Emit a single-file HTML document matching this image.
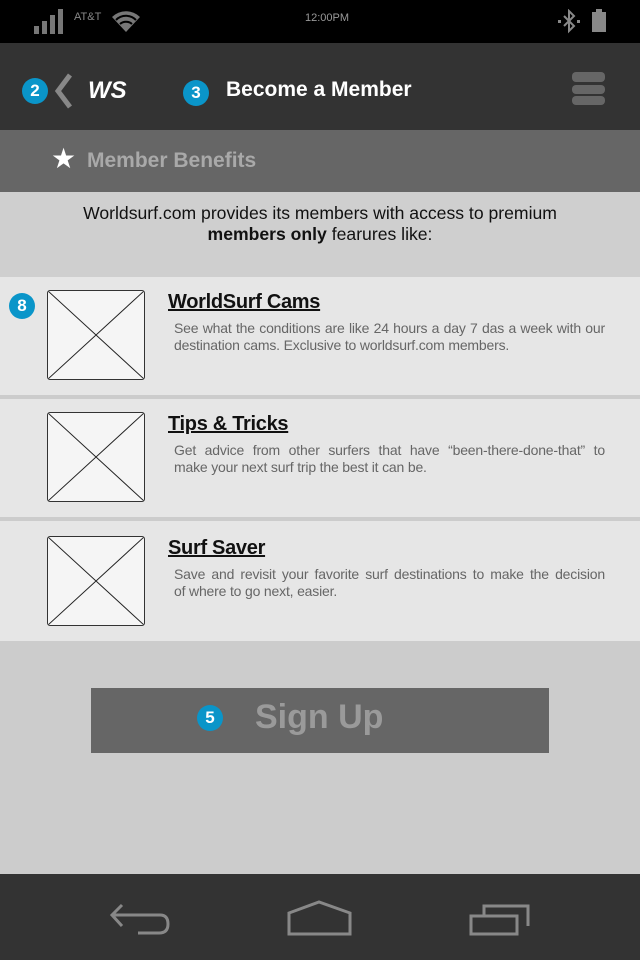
<!DOCTYPE html>
<html><head><style>
*{margin:0;padding:0;box-sizing:border-box}
body{width:640px;height:960px;background:#cccccc;font-family:"Liberation Sans",sans-serif;position:relative;overflow:hidden}
.abs{position:absolute}
.badge{position:absolute;width:26px;height:26px;border-radius:50%;background:#0a95c9;color:#fff;font-weight:bold;font-size:17px;text-align:center;line-height:26px}
.item{position:absolute;left:0;width:640px;background:#e6e6e6}
.img{position:absolute;left:47px;width:98px;height:90px;border:1.5px solid #333;border-radius:3px;background:#f5f5f5}
.ttl{position:absolute;left:168px;font-size:20px;font-weight:bold;color:#111;text-decoration:underline;letter-spacing:-0.3px}
.desc{position:absolute;left:174px;width:431px;font-size:14px;line-height:17px;color:#666;letter-spacing:-0.18px;white-space:nowrap}
.desc .j{text-align:justify;text-align-last:justify}
</style></head><body>
<div class="abs" style="left:0;top:0;width:640px;height:43px;background:#000"></div>
<svg class="abs" style="left:34px;top:8px" width="32" height="27"><rect x="0" y="18" width="5" height="8" fill="#777"/><rect x="8" y="13" width="5" height="13" fill="#777"/><rect x="16" y="7" width="5" height="19" fill="#777"/><rect x="24" y="1" width="5" height="25" fill="#777"/></svg>
<div class="abs" style="left:74px;top:11px;font-size:11px;color:#888">AT&amp;T</div>
<svg class="abs" style="left:110px;top:8px" width="32" height="25"><path d="M2 9 A20 20 0 0 1 30 9 L16 24 Z" fill="#777"/><path d="M6 12 A14 14 0 0 1 26 12 M10 16 A9 9 0 0 1 22 16" stroke="#000" stroke-width="2" fill="none"/></svg>
<div class="abs" style="left:305px;top:12px;font-size:11px;color:#999">12:00PM</div>
<svg class="abs" style="left:556px;top:9px" width="26" height="27"><path d="M8 7 L18 17 L13 22 L13 2 L18 7 L8 17" stroke="#888" stroke-width="2" fill="none"/><rect x="2" y="11" width="3" height="3" fill="#888"/><rect x="21" y="11" width="3" height="3" fill="#888"/></svg>
<svg class="abs" style="left:591px;top:9px" width="16" height="24"><rect x="5" y="0" width="6" height="3" fill="#888"/><rect x="1" y="3" width="14" height="20" fill="#888"/></svg>

<div class="abs" style="left:0;top:43px;width:640px;height:87px;background:#333"></div>
<div class="badge" style="left:22px;top:78px">2</div>
<svg class="abs" style="left:52px;top:73px" width="22" height="36"><path d="M18 2 L6 18 L18 34" stroke="#888" stroke-width="5" fill="none"/></svg>
<div class="abs" style="left:88px;top:77px;font-size:24px;font-weight:bold;font-style:italic;color:#fff">WS</div>
<div class="badge" style="left:183px;top:80px">3</div>
<div class="abs" style="left:226px;top:78px;font-size:21px;font-weight:bold;color:#fff">Become a Member</div>
<div class="abs" style="left:572px;top:72px;width:33px;height:10px;border-radius:4px;background:#666"></div>
<div class="abs" style="left:572px;top:85px;width:33px;height:9px;border-radius:4px;background:#666"></div>
<div class="abs" style="left:572px;top:96px;width:33px;height:9px;border-radius:4px;background:#666"></div>

<div class="abs" style="left:0;top:130px;width:640px;height:62px;background:#666"></div>
<div class="abs" style="left:51px;top:142px;font-size:28px;color:#fff">★</div>
<div class="abs" style="left:87px;top:149px;font-size:21px;font-weight:bold;color:#a9a9a9">Member Benefits</div>

<div class="abs" style="left:0;top:192px;width:640px;height:85px;background:#cfcfcf"></div>
<div class="abs" style="left:0;top:203px;width:640px;text-align:center;font-size:17.6px;line-height:21px;color:#111">Worldsurf.com provides its members with access to premium<br><b>members only</b> fearures like:</div>

<div class="item" style="top:277px;height:118px"></div>
<div class="item" style="top:399px;height:118px"></div>
<div class="item" style="top:521px;height:120px"></div>
<div class="badge" style="left:9px;top:293px">8</div>

<svg class="img" style="top:290px" viewBox="0 0 98 90" preserveAspectRatio="none"><path d="M0 0L98 90M98 0L0 90" stroke="#222" stroke-width="1"/></svg>
<div class="ttl" style="top:291px">WorldSurf Cams</div>
<div class="desc" style="top:320px"><div class="j">See what the conditions are like 24 hours a day 7 das a week with our</div><div>destination cams. Exclusive to worldsurf.com members.</div></div>

<svg class="img" style="top:412px" viewBox="0 0 98 90" preserveAspectRatio="none"><path d="M0 0L98 90M98 0L0 90" stroke="#222" stroke-width="1"/></svg>
<div class="ttl" style="top:413px">Tips &amp; Tricks</div>
<div class="desc" style="top:442px"><div class="j">Get advice from other surfers that have “been-there-done-that” to</div><div>make your next surf trip the best it can be.</div></div>

<svg class="img" style="top:536px" viewBox="0 0 98 90" preserveAspectRatio="none"><path d="M0 0L98 90M98 0L0 90" stroke="#222" stroke-width="1"/></svg>
<div class="ttl" style="top:537px">Surf Saver</div>
<div class="desc" style="top:566px"><div class="j">Save and revisit your favorite surf destinations to make the decision</div><div>of where to go next, easier.</div></div>

<div class="abs" style="left:91px;top:688px;width:458px;height:65px;background:#666"></div>
<div class="badge" style="left:197px;top:705px">5</div>
<div class="abs" style="left:255px;top:698px;font-size:34px;font-weight:bold;color:#9a9a9a">Sign Up</div>

<div class="abs" style="left:0;top:874px;width:640px;height:86px;background:#333"></div>
<svg class="abs" style="left:0;top:874px" width="640" height="86"><g stroke="#888" stroke-width="3" fill="none">
<path d="M122 31 L112 41 L122 52 M112 41 L160 41 Q168 41 168 50 Q168 59 159 59 L138 59"/>
<path d="M289 60 L289 39 L319 28 L350 39 L350 60 Z"/>
<path d="M471 42 L517 42 L517 60 L471 60 Z M484 41 L484 32 L528 32 L528 52"/>
</g></svg>
</body></html>
